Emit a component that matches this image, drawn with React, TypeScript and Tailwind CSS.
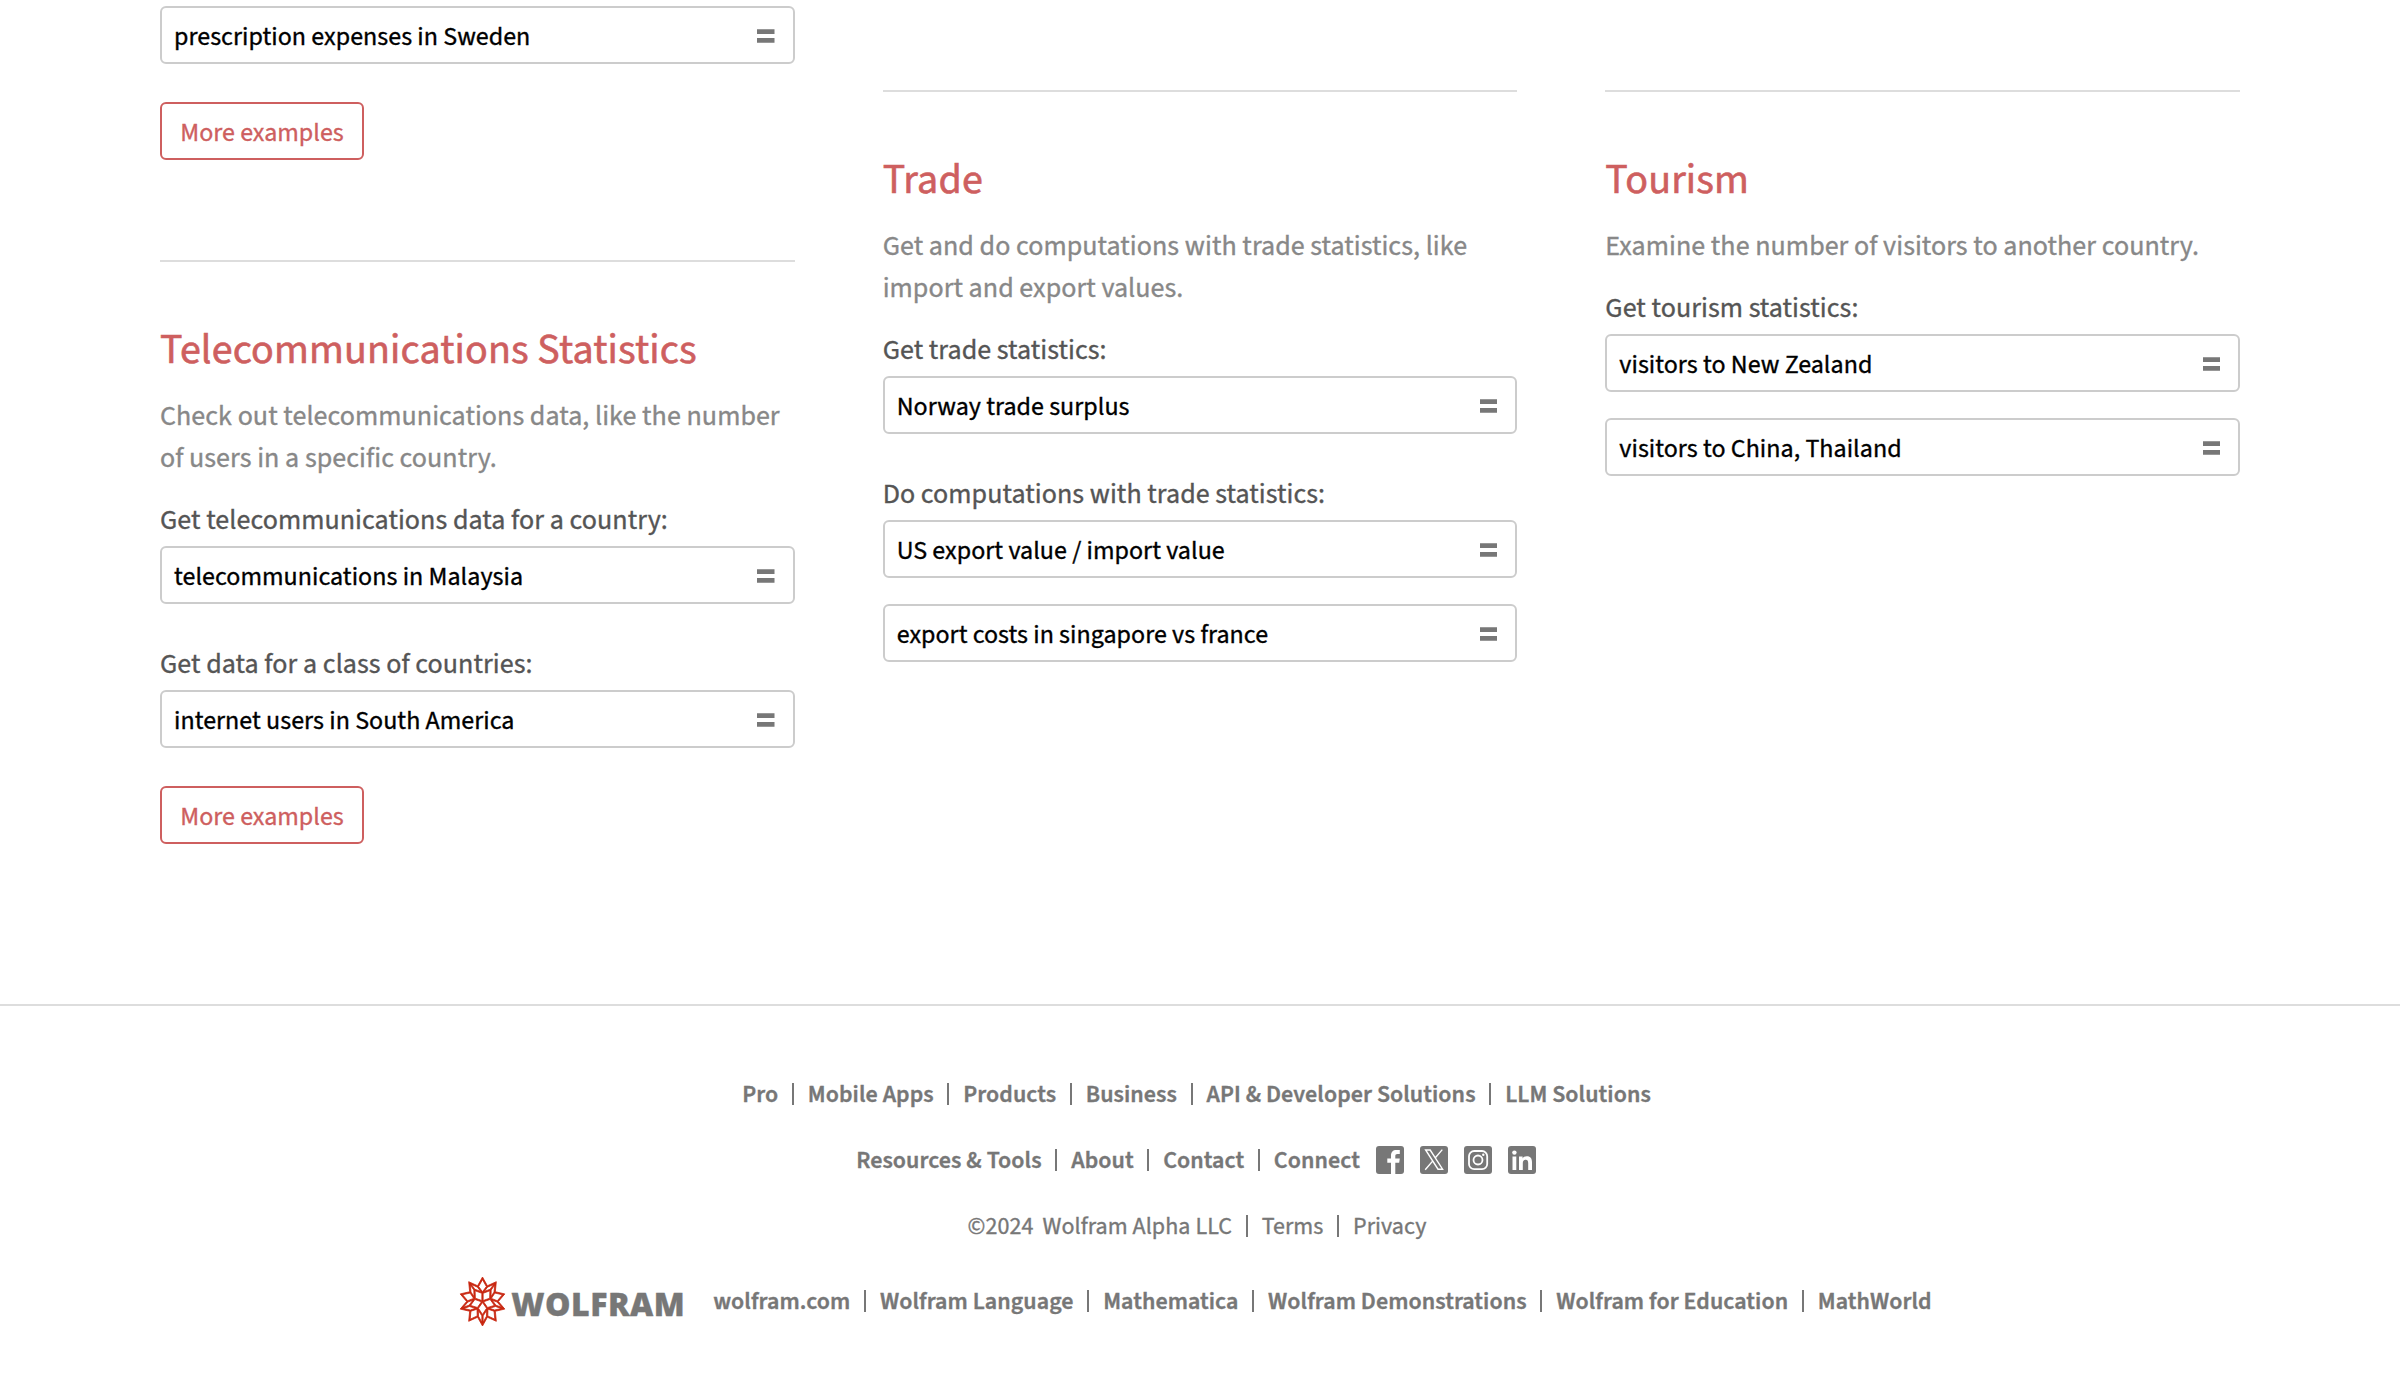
import { Fragment, type ReactNode } from 'react';
import { SiWolfram } from 'react-icons/si';

function Example({ text }: { text: string }) {
  return (
    <a className="flex h-[58px] items-start justify-between rounded-md border-2 border-[#ccc] pr-[18px] pl-3 text-[26px] tracking-[0.03px] text-black">
      <span className="pt-[10px] leading-[37px]">{text}</span>
      <svg className="mt-[21px] h-[14px] w-[17.5px]" viewBox="0 0 17.5 14" fill="#777">
        <path d="M0 .3h17.5v4.7H0zM0 9h17.5v4.7H0z" />
      </svg>
    </a>
  );
}

function MoreExamples() {
  return (
    <button className="mt-[38px] block h-[58px] w-[204px] rounded-md border-2 border-[#ce5f5f] text-[26px] leading-[37px] text-[#ce5f5f]">
      <span className="block pt-0.5">More examples</span>
    </button>
  );
}

type Group = { label: string; examples: string[] };

function Topic({ title, description, groups, children }: { title: string; description: string; groups: Group[]; children?: ReactNode }) {
  return (
    <section className="border-t-2 border-[#ddd] pt-[58px]">
      <h2 className="text-[42px] leading-[60px] tracking-[0.15px] text-[#ce5f5f] [-webkit-text-stroke-width:0.6px]">{title}</h2>
      <p className="mt-[15px] text-[28px] leading-[42px] tracking-[0.05px] text-[#888]">{description}</p>
      <div className="mt-[21px] flex flex-col gap-10">
        {groups.map((g) => (
          <div key={g.label}>
            <p className="text-[28px] leading-[40px] tracking-[0.06px] text-[#555]">{g.label}</p>
            <div className="mt-1.5 flex flex-col gap-[26px]">
              {g.examples.map((e) => (
                <Example key={e} text={e} />
              ))}
            </div>
          </div>
        ))}
      </div>
      {children}
    </section>
  );
}

function Links({ items }: { items: string[] }) {
  return (
    <>
      {items.map((item, i) => (
        <Fragment key={item}>
          {i > 0 && <span className="mx-[13.8px] h-[22px] w-0.5 bg-[#777]" />}
          <a className="pt-0.5 leading-[34px]">{item}</a>
        </Fragment>
      ))}
    </>
  );
}

function SocialIcons() {
  return (
    <div className="ml-4 flex gap-4">
      <svg className="size-7" viewBox="0 0 28 28">
        <rect width="28" height="28" rx="3" fill="#777" />
        <path fill="#fff" d="M15 28V16.8h-3.7v-4.2H15V9.5C15 6 17 4 20.3 4h3.5v4h-2.3c-1.7 0-2.2.8-2.2 2.2v2.4h4.5l-.6 4.2h-3.9V28z" />
      </svg>
      <svg className="size-7" viewBox="0 0 28 28">
        <rect width="28" height="28" rx="3" fill="#777" />
        <path fill="none" stroke="#fff" strokeWidth="1.4" d="M5.6 4h4.6l12.4 19.2H18zM22.3 3.6l-7.4 8.7M12.6 15.1l-7.4 8.7" />
      </svg>
      <svg className="size-7" viewBox="0 0 28 28">
        <rect width="28" height="28" rx="3" fill="#777" />
        <rect x="5" y="5" width="18.2" height="18.2" rx="5.2" fill="none" stroke="#fff" strokeWidth="1.8" />
        <circle cx="14" cy="14" r="4.5" fill="none" stroke="#fff" strokeWidth="1.8" />
        <circle cx="19.3" cy="8.8" r="1.2" fill="#fff" />
      </svg>
      <svg className="size-7" viewBox="0 0 28 28">
        <rect width="28" height="28" rx="3" fill="#777" />
        <circle cx="6.4" cy="6.6" r="2.2" fill="#fff" />
        <path fill="#fff" d="M4.5 10.6h3.8V24H4.5zM11 10.6h3.6v1.9c.7-1.3 2.2-2.2 4.2-2.2 4 0 5.2 2.5 5.2 6.2V24h-3.8v-6.8c0-1.9-.4-3.5-2.5-3.5s-2.9 1.5-2.9 3.4V24H11z" />
      </svg>
    </div>
  );
}

export default function App() {
  return (
    <div className="flex h-[1398px] flex-col overflow-hidden bg-white font-['Source_Sans_3','Noto_Sans_CJK_SC',sans-serif] [-webkit-text-stroke-width:0.35px]">
      <main className="grid h-[1004px] shrink-0 grid-cols-3 gap-[88px] px-40">
        <div className="pt-1.5">
          <Example text="prescription expenses in Sweden" />
          <MoreExamples />
          <div className="mt-[100px]">
            <Topic
              title="Telecommunications Statistics"
              description="Check out telecommunications data, like the number of users in a specific country."
              groups={[
                { label: 'Get telecommunications data for a country:', examples: ['telecommunications in Malaysia'] },
                { label: 'Get data for a class of countries:', examples: ['internet users in South America'] },
              ]}
            >
              <MoreExamples />
            </Topic>
          </div>
        </div>
        <div className="pt-[90px]">
          <Topic
            title="Trade"
            description="Get and do computations with trade statistics, like import and export values."
            groups={[
              { label: 'Get trade statistics:', examples: ['Norway trade surplus'] },
              { label: 'Do computations with trade statistics:', examples: ['US export value / import value', 'export costs in singapore vs france'] },
            ]}
          />
        </div>
        <div className="pt-[90px]">
          <Topic
            title="Tourism"
            description="Examine the number of visitors to another country."
            groups={[{ label: 'Get tourism statistics:', examples: ['visitors to New Zealand', 'visitors to China, Thailand'] }]}
          />
        </div>
      </main>
      <footer className="flex flex-col items-center border-t-2 border-[#ddd] pt-[71px] text-2xl font-semibold tracking-[0.07px] text-[#777]">
        <nav className="mr-[7px] flex h-[34px] items-center">
          <Links items={['Pro', 'Mobile Apps', 'Products', 'Business', 'API & Developer Solutions', 'LLM Solutions']} />
        </nav>
        <div className="mt-8 mr-2 flex h-[34px] items-center">
          <Links items={['Resources & Tools', 'About', 'Contact', 'Connect']} />
          <SocialIcons />
        </div>
        <div className="mt-8 mr-[6px] flex h-[34px] items-center font-normal">
          <span className="mr-[9px] pt-0.5 leading-[34px]">©2024</span>
          <Links items={['Wolfram Alpha LLC', 'Terms', 'Privacy']} />
        </div>
        <div className="mt-[41px] mr-[9px] flex h-[34px] items-center">
          <SiWolfram className="h-[49px] w-[47px] stroke-[#c8260f] stroke-[0.4] text-[#c8260f]" preserveAspectRatio="none" />
          <span className="mr-[28px] ml-[5px] pt-[5px] font-['Open_Sans'] text-[32px] leading-[34px] font-extrabold tracking-[0.5px]">WOLFRAM</span>
          <Links items={['wolfram.com', 'Wolfram Language', 'Mathematica', 'Wolfram Demonstrations', 'Wolfram for Education', 'MathWorld']} />
        </div>
      </footer>
    </div>
  );
}
